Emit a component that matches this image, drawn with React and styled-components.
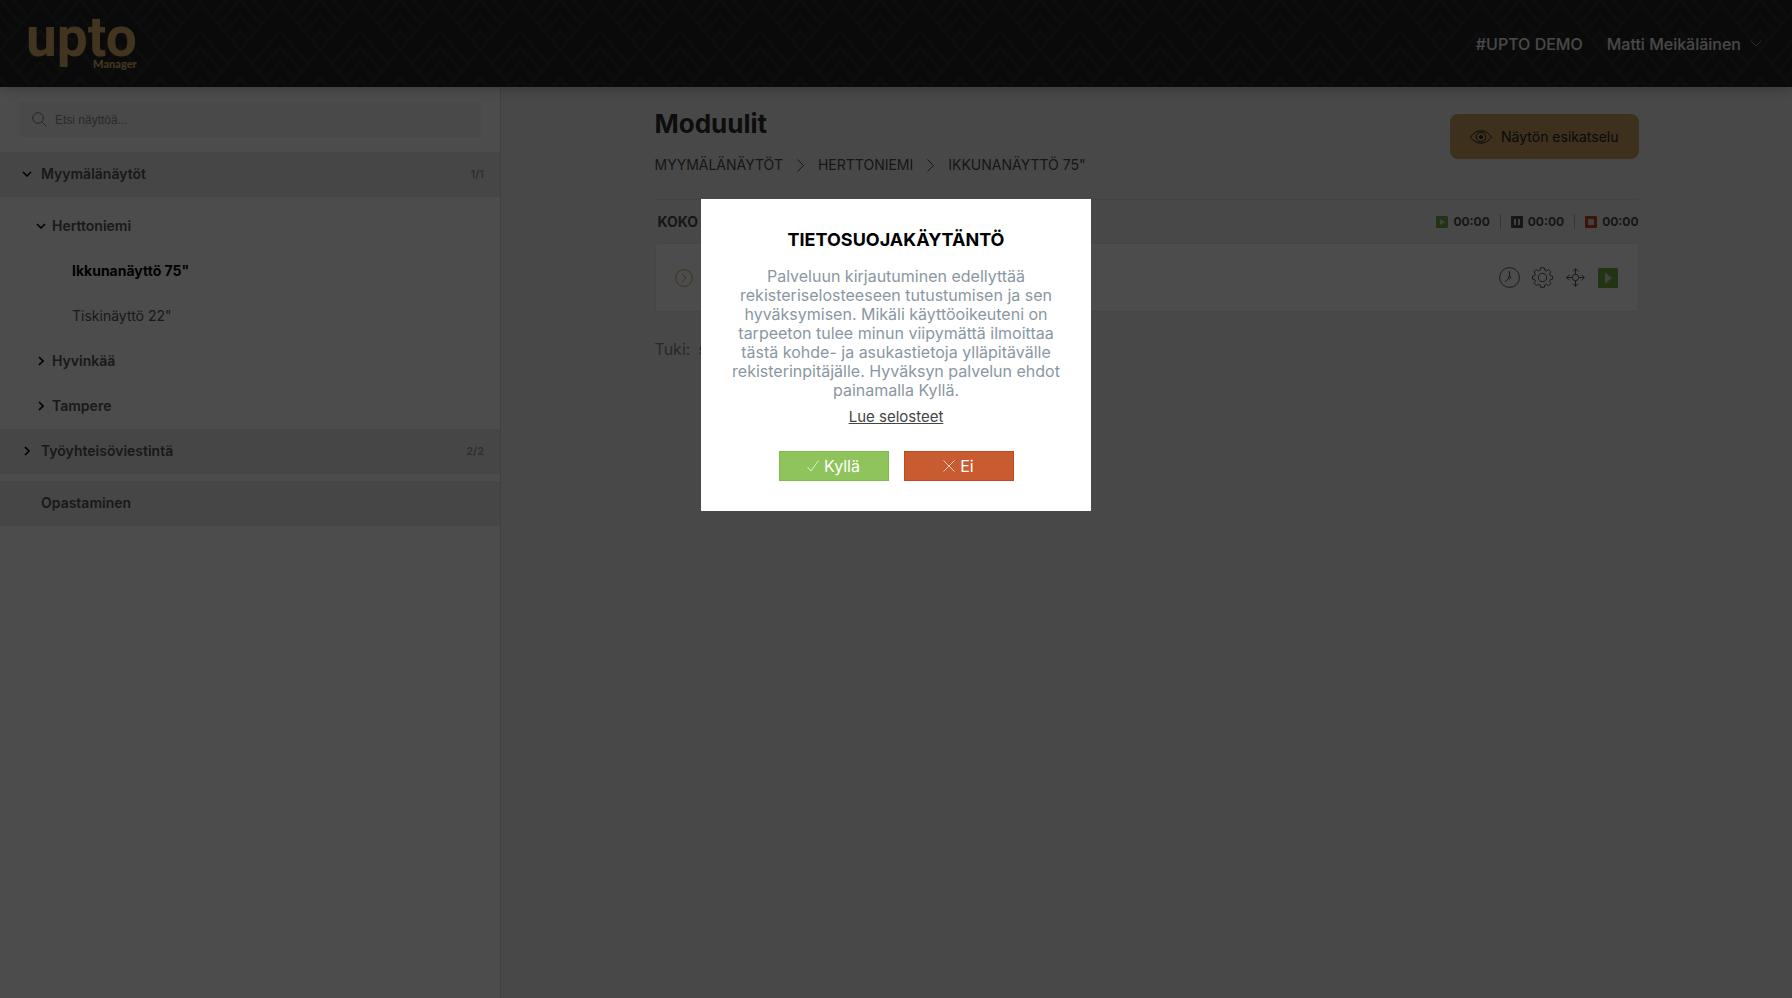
import React from "react";
import styled, { createGlobalStyle } from "styled-components";

const GlobalStyle = createGlobalStyle`
  *, *::before, *::after {
    box-sizing: border-box;
  }
  body {
    margin: 0;
    background: #f2f2f2;
    font-family: "Inter", "Liberation Sans", sans-serif;
    font-size: 14px;
    color: #4a4a4a;
  }
  button, input {
    font-family: inherit;
  }
`;

const Page = styled.div`
  min-height: 100vh;
  display: flex;
  flex-direction: column;
`;

const Header = styled.header`
  position: relative;
  z-index: 1;
  height: 87px;
  flex-shrink: 0;
  display: flex;
  justify-content: space-between;
  align-items: center;
  padding: 0 30px 0 26px;
  background: #242424;
  box-shadow: 0 0 14px rgba(0, 0, 0, 0.3);
`;

const Pattern = styled.svg`
  position: absolute;
  inset: 0;
  z-index: -1;
  width: 100%;
  height: 100%;
`;

const Logo = styled.a`
  display: flex;
  flex-direction: column;
  align-items: flex-end;
  color: #dcb26c;
  text-decoration: none;
`;

const LogoName = styled.span`
  font-family: "Roboto", sans-serif;
  font-size: 55px;
  font-weight: 700;
  line-height: 40px;
`;

const LogoSub = styled.span`
  font-family: "Lato", sans-serif;
  font-size: 11px;
  font-weight: 900;
  line-height: 14px;
`;

const UserNav = styled.nav`
  display: flex;
  gap: 24px;
`;

const NavButton = styled.button`
  display: flex;
  align-items: center;
  gap: 9px;
  padding: 0;
  border: 0;
  background: none;
  color: #f0f0f0;
  font-size: 16px;
  font-weight: 500;
  svg {
    color: #a08a60;
  }
`;

const Body = styled.div`
  flex: 1;
  display: flex;
`;

const Sidebar = styled.aside`
  width: 501px;
  flex-shrink: 0;
  background: #fff;
  border-right: 1px solid #d8d8d8;
`;

const Search = styled.label`
  display: flex;
  align-items: center;
  gap: 8px;
  height: 35px;
  margin: 15px 19px 15px 20px;
  padding: 0 12px;
  background: #f5f5f5;
  color: #777c84;
`;

const SearchInput = styled.input`
  flex: 1;
  border: 0;
  padding: 0;
  background: none;
  font-family: "Liberation Sans", sans-serif;
  font-size: 12px;
  &::placeholder {
    color: #8b9096;
    opacity: 1;
  }
`;

const Group = styled.button`
  display: flex;
  align-items: center;
  gap: 9px;
  width: 100%;
  height: 45px;
  margin-top: ${(p) => (p.$spaced ? "7px" : "0")};
  padding: 0 16px 2px 21px;
  border: 0;
  background: #ebebeb;
  color: #555;
  font-size: 14px;
  font-weight: 600;
  text-align: left;
`;

const Count = styled.span`
  margin-left: auto;
  font-size: 11px;
  font-weight: 600;
  color: #9a9a9a;
`;

const Tree = styled.ul`
  list-style: none;
  margin: 0;
  padding: 7px 0 0;
`;

const Node = styled.button`
  display: flex;
  align-items: center;
  gap: 6px;
  width: 100%;
  height: 45px;
  padding: 0 0 2px ${(p) => (p.$leaf ? "72px" : "35px")};
  border: 0;
  background: none;
  color: ${(p) => (p.$active ? "#000" : "#555")};
  font-size: 14px;
  font-weight: ${(p) => (p.$active ? 700 : p.$leaf ? 400 : 600)};
  text-align: left;
`;

const IconSlot = styled.span`
  display: flex;
  justify-content: center;
  width: 11px;
  color: #000;
`;

const Main = styled.main`
  flex: 1;
  padding: 20px 24px;
`;

const Content = styled.div`
  max-width: 984px;
  margin: 0 auto;
`;

const TitleRow = styled.div`
  display: flex;
  justify-content: space-between;
  align-items: flex-start;
  height: 93px;
  border-bottom: 1px solid #e2e2e2;
`;

const Title = styled.h1`
  margin: 0;
  font-size: 26px;
  line-height: 34px;
  font-weight: 700;
  color: #2c2c2c;
`;

const Crumbs = styled.nav`
  display: flex;
  align-items: center;
  gap: 14px;
  margin-top: 14px;
  line-height: 20px;
`;

const Crumb = styled.a`
  color: #4c4c4c;
  font-size: 14px;
  text-decoration: none;
`;

const Preview = styled.button`
  display: flex;
  align-items: center;
  gap: 9px;
  height: 45px;
  margin-top: 7px;
  padding: 0 20px;
  border: 0;
  border-radius: 8px;
  background: #cda364;
  color: #222;
  font-size: 14px;
`;

const SectionHead = styled.div`
  display: flex;
  justify-content: space-between;
  align-items: center;
  height: 43px;
  padding-left: 3px;
  font-weight: 700;
`;

const Times = styled.div`
  display: flex;
  font-size: 12px;
`;

const Time = styled.span`
  display: flex;
  align-items: center;
  gap: 5px;
  & + & {
    margin-left: 10px;
    padding-left: 10px;
    border-left: 1px solid #b4b4b4;
  }
`;

const Card = styled.section`
  display: flex;
  justify-content: space-between;
  align-items: center;
  height: 69px;
  padding: 0 20px 0 19px;
  border: 1px solid #e6e6e6;
  border-radius: 3px;
  background: #fff;
`;

const Actions = styled.div`
  display: flex;
  align-items: center;
  gap: 12px;
`;

const IconButton = styled.button`
  display: flex;
  padding: 0;
  border: 0;
  background: none;
  color: ${(p) => p.$color || "#555"};
`;

const Support = styled.p`
  display: flex;
  gap: 8px;
  margin: 27px 0 0;
  font-size: 16px;
  line-height: 20px;
  color: #888;
`;

const Overlay = styled.div`
  position: fixed;
  inset: 0;
  z-index: 10;
  display: flex;
  justify-content: center;
  align-items: flex-start;
  padding-top: 199px;
  background: rgba(0, 0, 0, 0.7);
`;

const Dialog = styled.div`
  width: 390px;
  padding: 30px 28px;
  background: #fff;
  text-align: center;
`;

const DialogTitle = styled.h2`
  margin: 0 0 16px;
  font-size: 18px;
  line-height: 22px;
  font-weight: 700;
  color: #000;
`;

const DialogText = styled.p`
  margin: 0;
  font-size: 16px;
  line-height: 19px;
  color: #8a97a3;
`;

const DialogLink = styled.a`
  display: block;
  margin-top: 7px;
  color: #444;
  font-size: 15px;
  line-height: 20px;
`;

const DialogActions = styled.div`
  display: flex;
  justify-content: center;
  gap: 15px;
  margin-top: 24px;
`;

const DialogButton = styled.button`
  display: flex;
  justify-content: center;
  align-items: center;
  gap: 5px;
  width: 110px;
  height: 30px;
  padding: 0;
  border: 1px solid ${(p) => (p.$accept ? "#7fbb4a" : "#c44a1c")};
  background: ${(p) => (p.$accept ? "#8fc45d" : "#c95b30")};
  color: #fff;
  font-size: 16px;
`;

const Line = ({ w = 12, h = 12, box, d, width = 1, children }) => (
  <svg width={w} height={h} viewBox={box || `0 0 ${w} ${h}`} fill="none" stroke="currentColor" strokeWidth={width} aria-hidden="true">
    {d && <path d={d} />}
    {children}
  </svg>
);

const Chevron = ({ open }) => (
  <IconSlot>
    {open ? (
      <Line w={10} h={6} d="M1 1l4 4 4-4" width={1.6} />
    ) : (
      <Line w={6} h={10} d="M1 1l4 4-4 4" width={1.6} />
    )}
  </IconSlot>
);

const Separator = () => <Line w={7} h={13} d="M.5.5l6 6-6 6" />;

const Gear = () => (
  <Line w={21} h={21}>
    <circle cx="10.5" cy="10.5" r="4.2" />
    <path
      d="M8.7.8h3.6l.5 2.4 1.7.7 2.2-1.4 2.2 2.3-1.3 2.1.7 1.7 2.3.5v2.9l-2.3.5-.7 1.8 1.3 2.1-2.2 2.2-2.2-1.3-1.7.7-.5 2.3H8.7l-.5-2.3-1.7-.7-2.2 1.3-2.2-2.2 1.3-2.1-.7-1.8-2.2-.5V9.1l2.2-.5.7-1.7-1.3-2.1 2.2-2.3 2.2 1.4 1.7-.7z"
      strokeLinejoin="round"
    />
  </Line>
);

const StatusIcon = ({ color, children }) => (
  <svg width="12" height="12" viewBox="0 0 12 12" aria-hidden="true">
    <rect width="12" height="12" rx="1" fill={color} />
    <g fill="#ddd">{children}</g>
  </svg>
);

const App = () => {
  return (
    <Page>
      <GlobalStyle />
      <Header>
        <Pattern aria-hidden="true">
          <defs>
            {/* diamond lattice with upward chevrons nested in every diamond */}
            <pattern id="zigzag" width="80" height="94" patternUnits="userSpaceOnUse">
              <g fill="none" stroke="#2e2e2e" strokeWidth="3">
                <path d="M0-44l80 94L0 144M80-44L0 50l80 94" />
                <path d="M12 64l28-33 28 33M18 72l22-25 22 25M25 80l15-18 15 18M32 88l8-9 8 9" />
                <path d="M-28 17L0-16l28 33M-22 25L0 0l22 25M-15 33L0 15l15 18M-8 41l8-9 8 9" />
                <path d="M52 17l28-33 28 33M58 25L80 0l22 25M65 33l15-18 15 18M72 41l8-9 8 9" />
                <path d="M-28 111L0 78l28 33M52 111l28-33 28 33" />
              </g>
            </pattern>
          </defs>
          <rect width="100%" height="100%" fill="url(#zigzag)" />
        </Pattern>
        <Logo href="#">
          <LogoName>upto</LogoName>
          <LogoSub>Manager</LogoSub>
        </Logo>
        <UserNav>
          <NavButton>#UPTO DEMO</NavButton>
          <NavButton>
            Matti Meikäläinen
            <Line w={12} h={7} d="M.5.5L6 6 11.5.5" />
          </NavButton>
        </UserNav>
      </Header>

      <Body>
        <Sidebar>
          <Search>
            <Line w={15} h={15}>
              <circle cx="6" cy="6" r="5.3" />
              <path d="M10 10l4.5 4.5" />
            </Line>
            <SearchInput type="text" placeholder="Etsi näyttöä..." aria-label="Etsi näyttöä" />
          </Search>
          <Group>
            <Chevron open />
            Myymälänäytöt
            <Count>1/1</Count>
          </Group>
          <Tree>
            <li><Node><Chevron open />Herttoniemi</Node></li>
            <li><Node $leaf $active>Ikkunanäyttö 75"</Node></li>
            <li><Node $leaf>Tiskinäyttö 22"</Node></li>
            <li><Node><Chevron />Hyvinkää</Node></li>
            <li><Node><Chevron />Tampere</Node></li>
          </Tree>
          <Group>
            <Chevron />
            Työyhteisöviestintä
            <Count>2/2</Count>
          </Group>
          <Group $spaced>
            <IconSlot />
            Opastaminen
          </Group>
        </Sidebar>

        <Main>
          <Content>
            <TitleRow>
              <div>
                <Title>Moduulit</Title>
                <Crumbs>
                  <Crumb href="#">MYYMÄLÄNÄYTÖT</Crumb>
                  <Separator />
                  <Crumb href="#">HERTTONIEMI</Crumb>
                  <Separator />
                  <Crumb href="#">IKKUNANÄYTTÖ 75"</Crumb>
                </Crumbs>
              </div>
              <Preview>
                <Line w={22} h={14}>
                  <path d="M.5 7C3.5 3 7 .8 11 .8S18.500 3 21.500 7C18.500 11 15 13.200 11 13.200S3.500 11 .5 7z" />
                  <circle cx="11" cy="7" r="4.8" />
                  <circle cx="11" cy="7" r="1.5" fill="currentColor" />
                </Line>
                Näytön esikatselu
              </Preview>
            </TitleRow>

            <SectionHead>
              <span>KOKO</span>
              <Times>
                <Time>
                  <StatusIcon color="#76b043"><path d="M4 3l5 3-5 3z" /></StatusIcon>
                  00:00
                </Time>
                <Time>
                  <StatusIcon color="#4a4a4a"><path d="M3 3h2v6H3zM7 3h2v6H7z" /></StatusIcon>
                  00:00
                </Time>
                <Time>
                  <StatusIcon color="#c8481c"><path d="M3 3h6v6H3z" /></StatusIcon>
                  00:00
                </Time>
              </Times>
            </SectionHead>

            <Card>
              <IconButton $color="#cda364" aria-label="Avaa">
                <Line w={18} h={18}>
                  <circle cx="9" cy="9" r="8.4" />
                  <path d="M7 5l4 4-4 4" />
                </Line>
              </IconButton>
              <Actions>
                <IconButton aria-label="Ajastus">
                  <Line w={21} h={21}>
                    <circle cx="10.5" cy="10.5" r="9.9" />
                    <circle cx="10.5" cy="10.5" r="1.2" />
                    <path d="M10.5 4v5.3M9.6 11.4L6 15" />
                  </Line>
                </IconButton>
                <IconButton aria-label="Asetukset"><Gear /></IconButton>
                <IconButton aria-label="Siirrä">
                  <Line w={21} h={21}>
                    <circle cx="10.5" cy="10.5" r="3.2" />
                    <path d="M10.5 7.3V1.8M10.5 13.7v5.500M7.300 10.500H1.800M13.700 10.500h5.500" />
                    <path d="M7.800 4.400l2.700-2.700 2.700 2.700M7.800 16.600l2.700 2.700 2.700-2.700M4.400 7.800l-2.700 2.700 2.700 2.700M16.600 7.800l2.700 2.700-2.700 2.700" />
                  </Line>
                </IconButton>
                <IconButton aria-label="Toista">
                  <svg width="20" height="20" viewBox="0 0 20 20" aria-hidden="true">
                    <rect width="20" height="20" rx="1" fill="#76b043" />
                    <path d="M7 4.5l7 5.500-7 5.500z" fill="#ddd" />
                  </svg>
                </IconButton>
              </Actions>
            </Card>

            <Support>
              <span>Tuki:</span>
              <span>s</span>
            </Support>
          </Content>
        </Main>
      </Body>

      <Overlay>
        <Dialog role="dialog" aria-modal="true" aria-labelledby="privacy-title">
          <DialogTitle id="privacy-title">TIETOSUOJAKÄYTÄNTÖ</DialogTitle>
          <DialogText>
            Palveluun kirjautuminen edellyttää rekisteriselosteeseen tutustumisen
            ja sen hyväksymisen. Mikäli käyttöoikeuteni on tarpeeton tulee minun
            viipymättä ilmoittaa tästä kohde- ja asukastietoja ylläpitävälle
            rekisterinpitäjälle. Hyväksyn palvelun ehdot painamalla Kyllä.
          </DialogText>
          <DialogLink href="#">Lue selosteet</DialogLink>
          <DialogActions>
            <DialogButton $accept>
              <Line d="M.5 7l3.500 4L11.500.500" width={0.7} />
              Kyllä
            </DialogButton>
            <DialogButton>
              <Line d="M.5.500l11 11M11.500.500l-11 11" width={0.7} />
              Ei
            </DialogButton>
          </DialogActions>
        </Dialog>
      </Overlay>
    </Page>
  );
};

export default App;
